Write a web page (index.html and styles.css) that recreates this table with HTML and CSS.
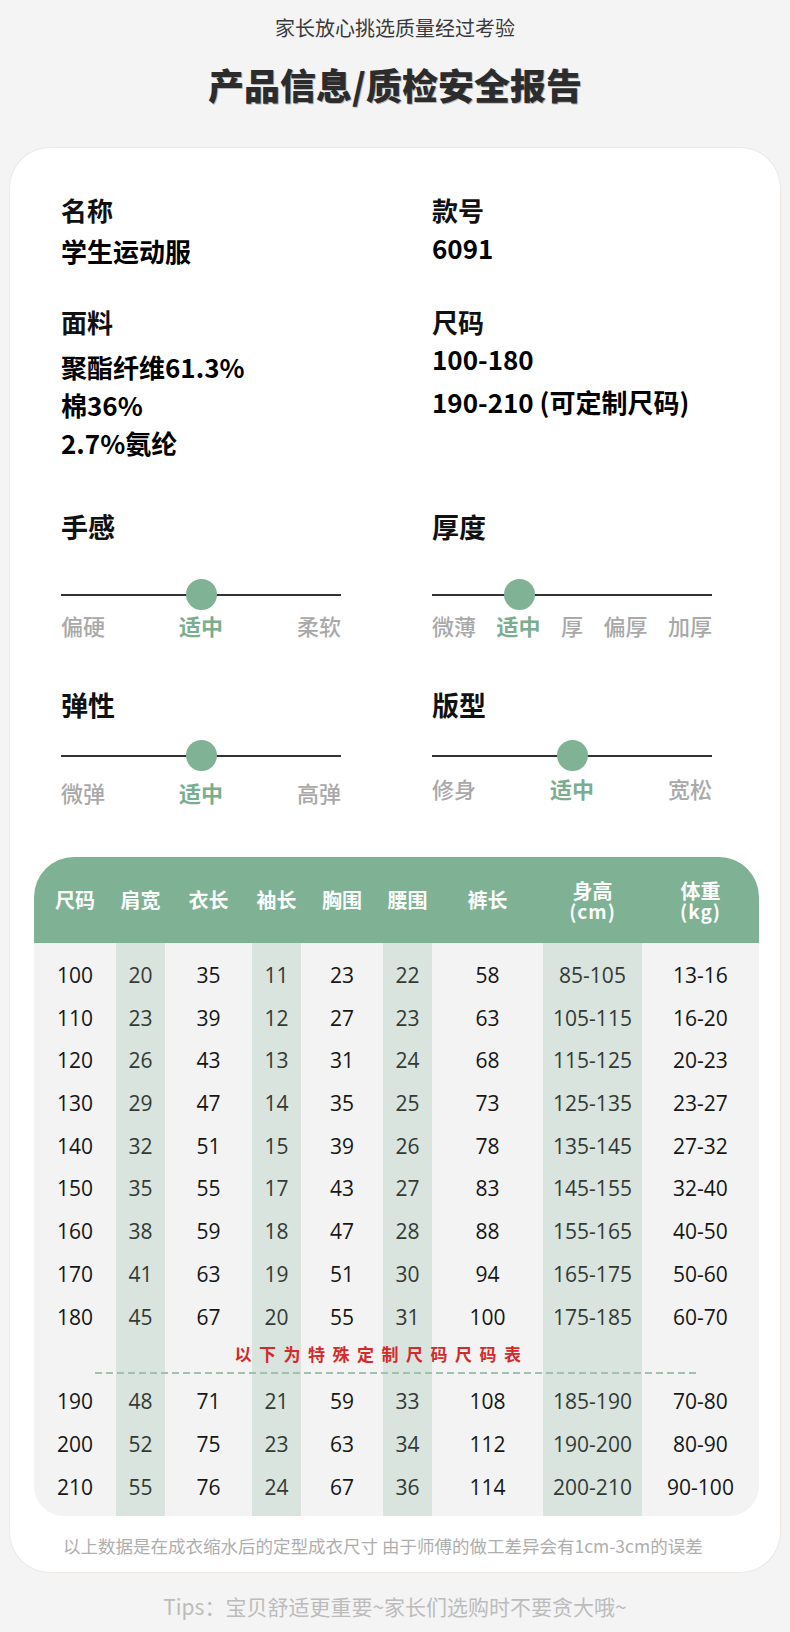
FILE: index.html
```html
<!DOCTYPE html>
<html lang="zh-CN">
<head>
<meta charset="utf-8">
<title>产品信息/质检安全报告</title>
<link rel="stylesheet" href="styles.css">
</head>
<body>
<header class="page-head">
  <p class="subtitle">家长放心挑选质量经过考验</p>
  <h1 class="title">产品信息/质检安全报告</h1>
</header>

<main class="card">
  <section class="info">
    <div class="field">
      <div class="label">名称</div>
      <div class="val first">学生运动服</div>
    </div>
    <div class="field">
      <div class="label">款号</div>
      <div class="val first num">6091</div>
    </div>
    <div class="field">
      <div class="label">面料</div>
      <div class="vals">
        <div class="val">聚酯纤维61.3%</div>
        <div class="val">棉36%</div>
        <div class="val">2.7%氨纶</div>
      </div>
    </div>
    <div class="field">
      <div class="label">尺码</div>
      <div class="vals sizes">
        <div class="val">100-180</div>
        <div class="val">190-210 (可定制尺码)</div>
      </div>
    </div>
  </section>

  <section class="metrics">
    <div class="metric">
      <div class="m-title">手感</div>
      <div class="track"><span class="knob" style="left:125px"></span></div>
      <div class="marks"><span>偏硬</span><span class="on">适中</span><span>柔软</span></div>
    </div>
    <div class="metric">
      <div class="m-title">厚度</div>
      <div class="track"><span class="knob" style="left:72px"></span></div>
      <div class="marks"><span>微薄</span><span class="on">适中</span><span>厚</span><span>偏厚</span><span>加厚</span></div>
    </div>
    <div class="metric compact">
      <div class="m-title">弹性</div>
      <div class="track"><span class="knob" style="left:125px"></span></div>
      <div class="marks"><span>微弹</span><span class="on">适中</span><span>高弹</span></div>
    </div>
    <div class="metric compact right">
      <div class="m-title">版型</div>
      <div class="track"><span class="knob" style="left:125px"></span></div>
      <div class="marks"><span>修身</span><span class="on">适中</span><span>宽松</span></div>
    </div>
  </section>

  <section class="size-table">
    <div class="thead">
      <div>尺码</div><div>肩宽</div><div>衣长</div><div>袖长</div><div>胸围</div><div>腰围</div><div>裤长</div>
      <div class="two"><span>身高</span><span class="unit">(cm)</span></div>
      <div class="two"><span>体重</span><span class="unit">(kg)</span></div>
    </div>
    <div class="tbody">
      <div class="row"><span>100</span><span class="hl">20</span><span>35</span><span class="hl">11</span><span>23</span><span class="hl">22</span><span>58</span><span class="hl">85-105</span><span>13-16</span></div>
      <div class="row"><span>110</span><span class="hl">23</span><span>39</span><span class="hl">12</span><span>27</span><span class="hl">23</span><span>63</span><span class="hl">105-115</span><span>16-20</span></div>
      <div class="row"><span>120</span><span class="hl">26</span><span>43</span><span class="hl">13</span><span>31</span><span class="hl">24</span><span>68</span><span class="hl">115-125</span><span>20-23</span></div>
      <div class="row"><span>130</span><span class="hl">29</span><span>47</span><span class="hl">14</span><span>35</span><span class="hl">25</span><span>73</span><span class="hl">125-135</span><span>23-27</span></div>
      <div class="row"><span>140</span><span class="hl">32</span><span>51</span><span class="hl">15</span><span>39</span><span class="hl">26</span><span>78</span><span class="hl">135-145</span><span>27-32</span></div>
      <div class="row"><span>150</span><span class="hl">35</span><span>55</span><span class="hl">17</span><span>43</span><span class="hl">27</span><span>83</span><span class="hl">145-155</span><span>32-40</span></div>
      <div class="row"><span>160</span><span class="hl">38</span><span>59</span><span class="hl">18</span><span>47</span><span class="hl">28</span><span>88</span><span class="hl">155-165</span><span>40-50</span></div>
      <div class="row"><span>170</span><span class="hl">41</span><span>63</span><span class="hl">19</span><span>51</span><span class="hl">30</span><span>94</span><span class="hl">165-175</span><span>50-60</span></div>
      <div class="row"><span>180</span><span class="hl">45</span><span>67</span><span class="hl">20</span><span>55</span><span class="hl">31</span><span>100</span><span class="hl">175-185</span><span>60-70</span></div>
      <div class="special">
        <div class="special-text">以下为特殊定制尺码尺码表</div>
        <div class="dash"></div>
      </div>
      <div class="row"><span>190</span><span class="hl">48</span><span>71</span><span class="hl">21</span><span>59</span><span class="hl">33</span><span>108</span><span class="hl">185-190</span><span>70-80</span></div>
      <div class="row"><span>200</span><span class="hl">52</span><span>75</span><span class="hl">23</span><span>63</span><span class="hl">34</span><span>112</span><span class="hl">190-200</span><span>80-90</span></div>
      <div class="row"><span>210</span><span class="hl">55</span><span>76</span><span class="hl">24</span><span>67</span><span class="hl">36</span><span>114</span><span class="hl">200-210</span><span>90-100</span></div>
    </div>
  </section>

  <p class="note">以上数据是在成衣缩水后的定型成衣尺寸 由于师傅的做工差异会有1cm-3cm的误差</p>
</main>

<p class="tips">Tips：宝贝舒适更重要~家长们选购时不要贪大哦~</p>
</body>
</html>
```

FILE: styles.css
```css
* { box-sizing: border-box; }

body {
  margin: 0;
  background: #f4f4f4;
  font-family: "Noto Sans CJK SC", "Noto Sans", sans-serif;
  color: #111;
}

.page-head { text-align: center; }

.subtitle {
  margin: 0;
  padding-top: 16px;
  font-size: 20px;
  line-height: 24px;
  color: #3a3a3a;
}

.title {
  margin: 19px 0 0;
  font-size: 36px;
  line-height: 50px;
  font-weight: 900;
  color: #2c2c2c;
  text-shadow: 1px 1px 0 rgba(0,0,0,0.25);
}

.card {
  margin: 39px 10px 0;
  background: #fff;
  border-radius: 40px;
  box-shadow: 0 0 0 1px #efe7e4;
  padding: 44px 0 13px;
}

/* product info */
.info {
  display: grid;
  grid-template-columns: 371px 1fr;
  row-gap: 33px;
  padding-left: 51px;
}

.label, .m-title {
  font-size: 26px;
  line-height: 36px;
  font-weight: 700;
  color: #111;
}

.val {
  font-size: 26px;
  line-height: 38px;
  font-weight: 700;
  color: #000;
}
.val.first { line-height: 40px; margin-top: 3px; }
.val.num { margin-top: 0; }
.vals { margin-top: 8px; }
.vals.sizes { margin-top: 0; }
.vals.sizes .val + .val { margin-top: 5px; }

/* sliders */
.metrics {
  display: grid;
  grid-template-columns: 371px 280px;
  row-gap: 47px;
  padding-left: 51px;
  margin-top: 47px;
}

.metric { width: 280px; }

.m-title { font-size: 27px; }

.track {
  position: relative;
  height: 31px;
  margin-top: 34px;
  background: linear-gradient(#333, #333) center / 100% 2px no-repeat;
}
.metric.compact .track { margin-top: 17px; }

.knob {
  position: absolute;
  top: 0;
  width: 31px;
  height: 31px;
  border-radius: 50%;
  background: #80b295;
}

.marks {
  display: flex;
  justify-content: space-between;
  font-size: 22px;
  line-height: 30px;
  font-weight: 500;
  color: #a9a9a9;
}
.metric.compact .marks { margin-top: 6px; }
.metric.compact.right .marks { margin-top: 2px; }
.marks .on { color: #7aae8f; font-weight: 700; }

/* size table */
.size-table {
  width: 725px;
  margin: 50px 0 0 24px;
}

.thead, .row {
  display: grid;
  grid-template-columns: 82px 49px 87px 49px 82px 49px 111px 99px 117px;
  text-align: center;
}

.thead {
  height: 86px;
  align-items: center;
  background: #7fb195;
  border-radius: 40px 40px 0 0;
  color: #fbfdfb;
  font-size: 20px;
  font-weight: 700;
  line-height: 24px;
}
.thead .two {
  display: flex;
  flex-direction: column;
  align-items: center;
  padding-top: 2px;
}
.thead .two span { display: block; line-height: 20px; }
.thead .two .unit { font-size: 19px; letter-spacing: 1px; }

.tbody {
  padding: 11px 0 8px;
  border-radius: 0 0 30px 30px;
  background:
    linear-gradient(to right,
      transparent 82px, #d8e4dd 82px 131px,
      transparent 131px 218px, #d8e4dd 218px 267px,
      transparent 267px 349px, #d8e4dd 349px 398px,
      transparent 398px 509px, #d8e4dd 509px 608px,
      transparent 608px),
    #f2f3f2;
}

.row {
  height: 42.7px;
  line-height: 42.7px;
  font-family: "Open Sans", "Noto Sans", sans-serif;
  font-size: 21px;
  color: #161616;
}
.row .hl { color: #333a36; }

.special {
  height: 42px;
  padding-top: 3px;
}
.special-text {
  text-align: center;
  margin-right: 30px;
  font-size: 17px;
  line-height: 26px;
  font-weight: 700;
  letter-spacing: 7.5px;
  color: #d42a2a;
}
.dash {
  height: 2px;
  margin: 5px 61px 0;
  background: repeating-linear-gradient(to right, #9fc1ae 0 7px, transparent 7px 11px);
}

.note {
  margin: 17px 0 0;
  padding-left: 53px;
  font-size: 17.5px;
  line-height: 26px;
  color: #aeaeae;
}

.tips {
  margin: 19px 0 0;
  text-align: center;
  font-size: 21px;
  line-height: 30px;
  color: #bcbcbc;
}
```
